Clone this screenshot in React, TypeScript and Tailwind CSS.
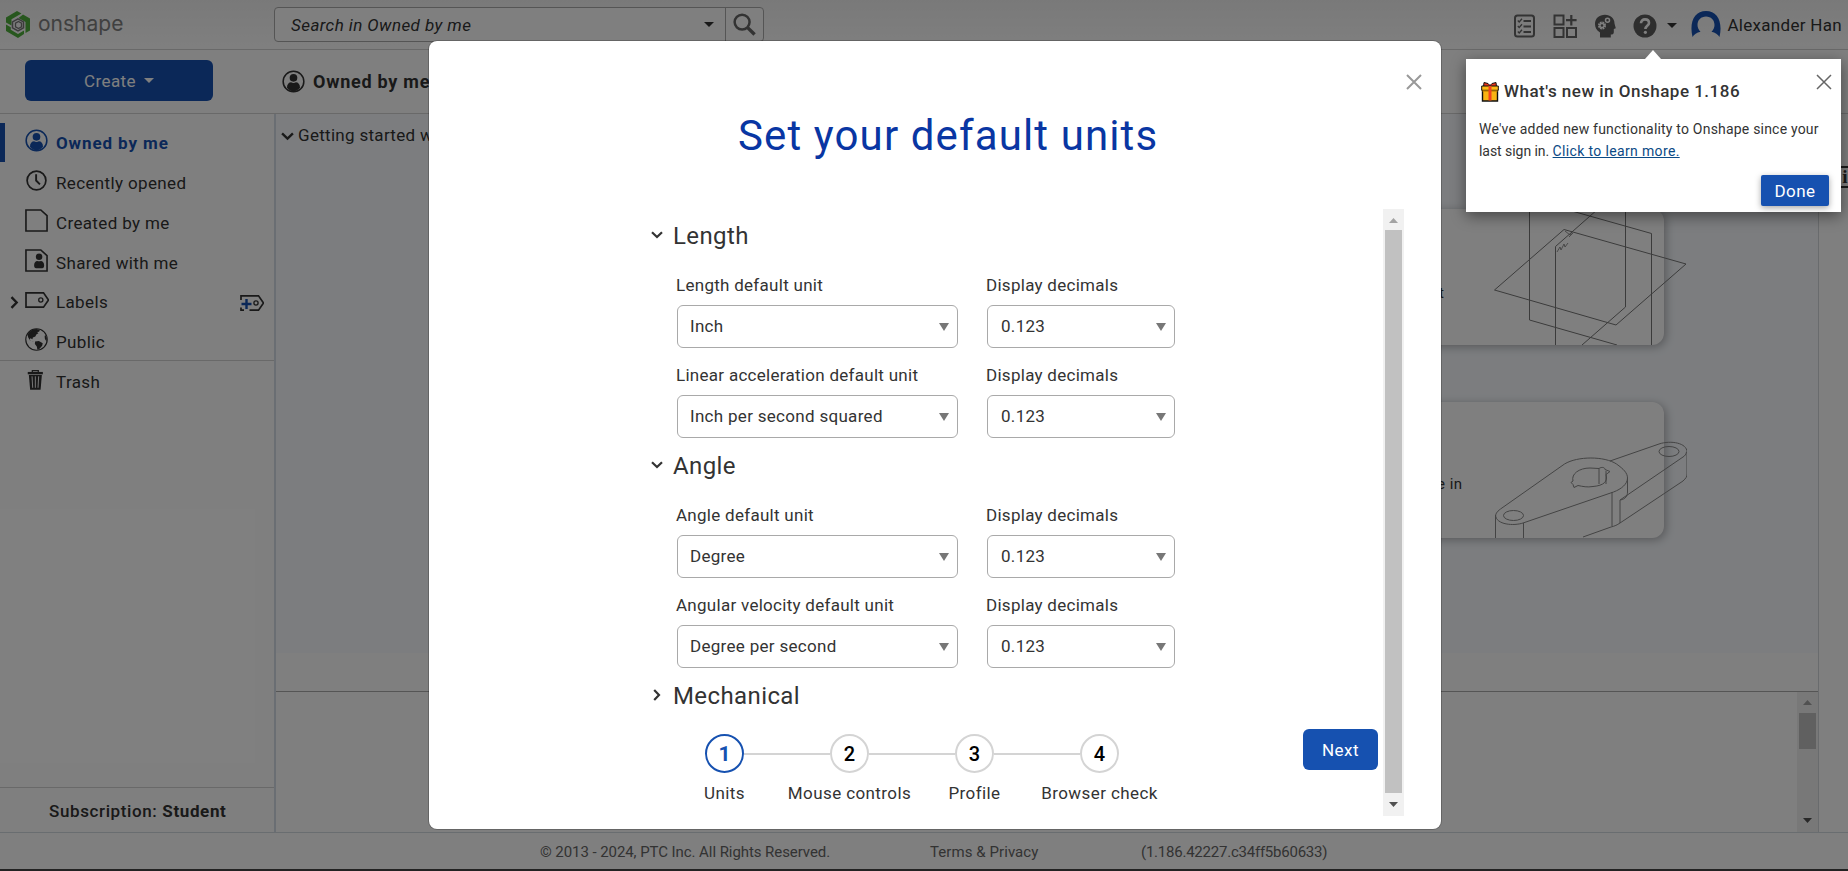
import React from 'react';

type P = { className?: string };

const UserCircle = ({ className }: P) => (
  <svg viewBox="0 0 24 24" className={className} fill="none">
    <circle cx="12" cy="12" r="10.8" stroke="currentColor" strokeWidth="1.6" />
    <circle cx="12" cy="8.2" r="4" fill="currentColor" />
    <path d="M5.2 18.4c0-3.6 2-5.6 4.3-5.6 1.6 1 3.4 1 5 0 2.3 0 4.3 2 4.3 5.6-1.7 2.3-4.1 3.6-6.8 3.6s-5.1-1.3-6.8-3.6z" fill="currentColor" />
  </svg>
);

const Clock = ({ className }: P) => (
  <svg viewBox="0 0 24 24" className={className} fill="none" stroke="currentColor">
    <circle cx="12" cy="12" r="9.8" strokeWidth="1.8" />
    <path d="M11.600 5.500v6.500l4 4" strokeWidth="2" />
  </svg>
);

const Doc = ({ className }: P) => (
  <svg viewBox="0 0 24 24" className={className} fill="none" stroke="currentColor" strokeWidth="1.700">
    <path d="M1 1h15.500L23 7v16H1z" />
  </svg>
);

const SharedDoc = ({ className }: P) => (
  <svg viewBox="0 0 24 24" className={className} fill="none">
    <path d="M1 1h15.500L23 7v16H1z" stroke="currentColor" strokeWidth="1.700" />
    <circle cx="14.700" cy="8.200" r="3.400" fill="currentColor" />
    <path d="M9.500 17c0-3 1.500-4.600 3.300-4.600 1.200.6 2.600.6 3.800 0 1.800 0 3.400 1.600 3.400 4.600 0 2-.8 3.200-2 3.200h-6.500c-1.200 0-2-1.200-2-3.200z" fill="currentColor" />
  </svg>
);

const Tag = ({ className }: P) => (
  <svg viewBox="0 0 24 24" className={className} fill="none" stroke="currentColor" strokeWidth="1.700">
    <path d="M1 4.800h17.500l5 7.200-5 7.200H1z" />
    <circle cx="15.800" cy="12" r="2.100" strokeWidth="1.300" />
  </svg>
);

const TagPlus = ({ className }: P) => (
  <svg viewBox="0 0 24 24" className={className} fill="none" stroke="#333" strokeWidth="1.700">
    <path d="M1 9V4.800h17.500l5 7.200-5 7.200H9.500M1 16.500v2.700h3" />
    <circle cx="16" cy="12" r="2.100" strokeWidth="1.300" />
    <path d="M6.500 8v10M1.500 13h10" stroke="#1651b0" strokeWidth="2.400" />
  </svg>
);

const Globe = ({ className }: P) => (
  <svg viewBox="0 0 24 24" className={className} fill="none">
    <circle cx="12" cy="12" r="11.200" stroke="currentColor" strokeWidth="1.200" />
    <path d="M2.500 7C4.500 3 8 1 12 1l3.500 1.200-.8 1.600-2 .4 1.300 1.400-2.200 1.200-1 2-2.600 1.200-.4 1.800-2.200-1-.8 1.400 1.600 1.200 2.800.8L8.600 14 5 12.800 3.400 10z" fill="currentColor" />
    <path d="M10.500 14.200l4-.6 4 2.200-.6 2.600-3 3.400-2 .6-.6-3.200-2-2.400z" fill="currentColor" />
    <path d="M21 6.800l1.800 3.700-.3 3.500-1.700-2.500-.3-2.500z" fill="currentColor" />
  </svg>
);

const Trash = ({ className }: P) => (
  <svg viewBox="0 0 24 24" className={className} fill="none">
    <path d="M8 3.500V1.800h6.500v1.700" stroke="currentColor" strokeWidth="1.400" />
    <path d="M3 3.200h16.500v2.600H3z" fill="currentColor" />
    <path d="M4.200 6.500h14.200L17 22.500H5.600z" fill="currentColor" />
    <path d="M7.700 8l.7 12.500M11.300 8v12.500M14.900 8l-.7 12.500" stroke="#fff" strokeWidth="1" />
  </svg>
);

const Chevron = ({ className }: P) => (
  <svg viewBox="0 0 12 8" className={className} fill="none" stroke="currentColor" strokeWidth="2.200">
    <path d="M1 1.200l5 4.800 5-4.800" />
  </svg>
);

const Triangle = ({ className }: P) => (
  <svg viewBox="0 0 10 6" preserveAspectRatio="none" className={className} fill="currentColor">
    <path d="M0 0h10L5 6z" />
  </svg>
);

const Cross = ({ className }: P) => (
  <svg viewBox="0 0 16 16" className={className} fill="none" stroke="currentColor">
    <path d="M1 1l14 14M15 1L1 15" />
  </svg>
);

const Logo = () => (
  <svg viewBox="0 0 24 27" className="h-[27px] w-6" fill="none">
    <path d="M11 0l4.500 2.600-10 5.700v6.200L0 11.600V6.500z" fill="#4fae3c" />
    <path d="M17 3.500l7 4v12l-4.500 2.500V11L12.500 7z" fill="#4fae3c" />
    <path d="M0 13.500l4.800 2.700v2.600L12 23l6-3.400 0 3.400-6 4L0 20z" fill="#4fae3c" />
    <path d="M12 7.800l5.500 3.100v6L12 20l-5.500-3.100v-6z" stroke="#777" strokeWidth="1.500" />
    <path d="M12.500 10.500l3 1.700v3.600l-3 1.700-3-1.700v-3.600z" stroke="#777" strokeWidth="1.300" />
  </svg>
);

const ChecklistIcon = () => (
  <svg viewBox="0 0 21 24" className="h-6 w-[21px]" fill="none" stroke="#666">
    <rect x="1" y="1.500" width="19" height="21" rx="2.500" strokeWidth="2" />
    <path d="M9.500 7H17M9.500 12.500H17M9.500 18H17" strokeWidth="2" />
    <path d="M3.800 6.500l1.400 1.500L8 4.800M3.800 12l1.400 1.500L8 10.300M3.800 17.500L5.200 19 8 15.800" strokeWidth="1.300" />
  </svg>
);

const AppsIcon = () => (
  <svg viewBox="0 0 24 24" className="h-6 w-6" fill="none" stroke="#666" strokeWidth="2">
    <rect x="1.500" y="1.500" width="9" height="9" />
    <rect x="1.500" y="14" width="9" height="9" />
    <rect x="14" y="14" width="9" height="9" />
    <path d="M18.300 1v10.500M13 6.200h10.600" strokeWidth="2.200" />
  </svg>
);

const HeadIcon = () => (
  <svg viewBox="0 0 22 24" className="h-6 w-[22px]">
    <path d="M11 .8c5.600 0 9.500 3.500 9.500 8.700l1.300 4.700-2 .8v3.200c0 1.500-1 2.300-3 2.300v3H6v-5C2.500 16.500 1 13.500 1 10 1 4.500 5.200.8 11 .8z" fill="#5c5c5c" />
    <circle cx="8" cy="11.500" r="3" fill="none" stroke="#fff" strokeWidth="2" strokeDasharray="1.700 .65" />
    <circle cx="8" cy="11.500" r="2" fill="none" stroke="#fff" strokeWidth="1.300" />
    <circle cx="13.500" cy="6.300" r="2" fill="none" stroke="#fff" strokeWidth="1.500" />
  </svg>
);

const HelpIcon = () => (
  <svg viewBox="0 0 24 24" className="h-6 w-6" fill="none">
    <circle cx="12" cy="12" r="11.500" fill="#5c5c5c" />
    <path d="M8 9.300c0-2.400 1.700-3.900 4-3.900s4 1.400 4 3.500c0 2.800-3.600 2.900-3.600 6" stroke="#fff" strokeWidth="2.600" />
    <circle cx="12.400" cy="18.300" r="1.600" fill="#fff" />
  </svg>
);

const Avatar = () => (
  <svg viewBox="0 0 30 30" className="h-[30px] w-[30px]">
    <path d="M1.500 26C-2 11 3.500 0 15 0s17 11 13.500 26c-1.500-2.700-4.300-4.300-8-5.300 2-1.900 3-4.200 3-6.700 0-5-3.500-8.500-8.500-8.500S6.500 9 6.500 14c0 2.500 1 4.800 3 6.700-3.700 1-6.500 2.600-8 5.300z" fill="#1651b0" />
  </svg>
);

const Gift = () => (
  <svg viewBox="0 0 18 21" className="h-[21px] w-[18px]">
    <path d="M3 1.500l4 1 2 2 2-2 4-1 .5 4.500h-13z" fill="#e8361c" stroke="#111" strokeWidth="1" />
    <path d="M1.500 9h15v11h-15z" fill="#f9b412" stroke="#111" strokeWidth="1.400" />
    <path d="M.7 5h16.600v4.300H.7z" fill="#fdb913" stroke="#111" strokeWidth="1" />
    <path d="M1.500 9.300h15v1.400h-15z" fill="#c98600" />
    <path d="M7.500 5h3v14.500h-3z" fill="#f0431f" />
  </svg>
);

function NavItem({ icon, label, active, before, after }: { icon: React.ReactNode; label: string; active?: boolean; before?: React.ReactNode; after?: React.ReactNode }) {
  return (
    <div className="flex h-[39.8px] items-center">
      <div className={active ? 'h-[39px] w-[5px] shrink-0 bg-[#1651b0]' : 'h-[39px] w-[5px] shrink-0'} />
      <div className="flex w-5 justify-center">{before}</div>
      <div className={active ? '-mt-1 w-[31px] text-[#1651b0]' : '-mt-1 w-[31px]'}>{icon}</div>
      <span className={active ? 'pt-0.5 font-bold tracking-[0.9px] text-[#1651b0]' : 'pt-0.5 tracking-[0.36px]'}>{label}</span>
      {after && <div className="mt-0.5 mr-[10px] ml-auto">{after}</div>}
    </div>
  );
}

function Field({ label, value, small }: { label: string; value: string; small?: boolean }) {
  return (
    <div className={small ? 'w-[188px]' : 'w-[281px]'}>
      <div className="-ml-px h-5 leading-5 tracking-[0.28px] whitespace-nowrap">{label}</div>
      <div className="mt-2.5 flex h-[43px] items-center justify-between rounded-md border border-[#a9a9a9] pr-2 pl-3">
        <span className={small ? 'pt-px pl-px tracking-[0.3px]' : 'pt-px tracking-[0.3px]'}>{value}</span>
        <Triangle className="h-2 w-2.5 text-[#777]" />
      </div>
    </div>
  );
}

function Fields({ rows }: { rows: [string, string][] }) {
  return (
    <div className="flex flex-col gap-[17px] pt-[25px] pb-3 pl-[248px]">
      {rows.map(([l, v]) => (
        <div key={l} className="flex gap-[29px]">
          <Field label={l} value={v} />
          <Field label="Display decimals" value="0.123" small />
        </div>
      ))}
    </div>
  );
}

function Heading({ text, closed }: { text: string; closed?: boolean }) {
  return (
    <div className="flex h-[30px] items-center pl-[220px]">
      <div className="flex w-6 pl-0.5">
        <Chevron className={closed ? 'h-2 w-3 -rotate-90' : 'h-2 w-3'} />
      </div>
      <span className="pt-0.5 text-[24px] leading-[30px] tracking-[0.4px]">{text}</span>
    </div>
  );
}

function Steps() {
  const steps = ['Units', 'Mouse controls', 'Profile', 'Browser check'];
  return (
    <div className="flex pt-[5px] pl-[233px]">
      {steps.map((s, i) => (
        <div key={s} className="flex w-[125px] flex-col items-center">
          <div className="flex h-[39px] w-full items-center">
            <div className={i === 0 ? 'h-0.5 flex-1' : 'h-0.5 flex-1 bg-[#d4d4d4]'} />
            <div
              className={
                i === 0
                  ? 'flex h-[39px] w-[39px] items-center justify-center rounded-full border-2 border-[#1651b0] pt-0.5 text-[21px] font-bold text-[#1651b0]'
                  : 'flex h-[39px] w-[39px] items-center justify-center rounded-full border-2 border-[#d4d4d4] text-[20px] font-medium text-black'
              }
            >
              {i + 1}
            </div>
            <div className={i === 3 ? 'h-0.5 flex-1' : 'h-0.5 flex-1 bg-[#d4d4d4]'} />
          </div>
          <span className="mt-2.5 leading-5 tracking-[0.4px] whitespace-nowrap">{s}</span>
        </div>
      ))}
    </div>
  );
}

const Planes = () => (
  <svg viewBox="0 0 194 136" className="absolute top-0 -right-[23px] h-[136px] w-[194px]" fill="none" stroke="#777" strokeWidth="1">
    <path d="M36.500 0v111L124 136" />
    <path d="M36.500 -10L158.500 24.500V136" />
    <path d="M62.500 136V37.500L105 0" />
    <path d="M132.500 0v98L89 136" />
    <path d="M71 20.500L193 55l-70 61L1.500 81z" />
    <path d="M72 22l5 4 2-3M76 28l4-4M64 43l3-5 1 3 3-6 1 3 3-4" strokeWidth=".8" />
  </svg>
);

const Bracket = () => (
  <svg viewBox="0 0 194 136" className="absolute -right-[23px] bottom-0 h-[136px] w-[194px]" fill="none" stroke="#888" strokeWidth="1">
    <path d="M2.500 136v-21c0-3 1-5 5-8l64-45c13-8 40-8 52 0 7 5 11 9 11 14 0 6-6 11-14 14L30 121c-9 3-27 2-27.500-8" />
    <path d="M117 59l49-17c12-4 28-1 28 8v22c0 3-1 4-4 7l-63 42c-3 2-5 3-9 4l-28 10M119 90v34M134.500 76v14c0 4-2 7-7 8M127 98v23M127 98l63-43c2-1 3-3 3.500-5M30.500 121v15" />
    <ellipse cx="20.500" cy="113.500" rx="10" ry="5" />
    <ellipse cx="176" cy="49.500" rx="10" ry="5" />
    <path d="M80 79c-2-7 6-13 17-13l9 .5c3-2 6-1 6 1l5 2-4 3c2 7-2 11-13 12-6 1-10 0-15-1l-4 2-1-3-2-2zM106 67v15M113 69v13" />
  </svg>
);

function Background() {
  return (
    <div className="flex h-[871px] w-full flex-col bg-white">
      <header className="flex h-[50px] shrink-0 items-center border-b border-[#d2d2d2] bg-linear-to-b from-[#f3f3f3] to-white">
        <div className="flex w-[274px] items-center pl-1.5">
          <Logo />
          <span className="-mt-0.5 ml-2 font-['Inter'] text-[21px] text-[#808080]">onshape</span>
        </div>
        <div className="flex h-[35px] w-[490px] rounded border border-[#aaa] bg-white">
          <div className="flex flex-1 items-center justify-between pr-[11px] pl-4">
            <span className="pt-0.5 tracking-[0.42px] italic">Search in Owned by me</span>
            <Triangle className="h-[5px] w-2.5" />
          </div>
          <div className="flex w-[38px] items-center justify-center border-l border-[#aaa]">
            <svg viewBox="0 0 24 24" className="h-[23px] w-[23px]" fill="none" stroke="#666">
              <circle cx="9.500" cy="9.500" r="7.800" strokeWidth="2.600" />
              <path d="M15 15l7.500 7.500" strokeWidth="3.600" />
            </svg>
          </div>
        </div>
        <div className="ml-auto flex items-center pt-0.5 pr-1.5">
          <ChecklistIcon />
          <div className="w-[18px]" />
          <AppsIcon />
          <div className="w-[17px]" />
          <HeadIcon />
          <div className="w-[17px]" />
          <HelpIcon />
          <Triangle className="mr-[14px] ml-[10px] h-[5px] w-2.5" />
          <Avatar />
          <span className="ml-1.5 tracking-[0.3px]">Alexander Han</span>
        </div>
      </header>
      <div className="flex h-16 shrink-0 items-center border-b border-[#d2d2d2]">
        <div className="-mt-0.5 ml-[25px] flex h-[41px] w-[188px] items-center justify-center gap-2 rounded-md bg-[#1651b0] pb-px text-white">
          <span className="pt-1 tracking-[0.4px]">Create</span>
          <Triangle className="h-[5px] w-2.5" />
        </div>
        <UserCircle className="ml-[69px] h-[23px] w-[23px]" />
        <span className="ml-2 text-[18px] font-bold tracking-[0.75px]">Owned by me</span>
      </div>
      <div className="flex min-h-0 flex-1">
        <nav className="flex w-[276px] shrink-0 flex-col border-r-2 border-[#d4dde6] pt-[9px]">
          <NavItem active icon={<UserCircle className="h-[23px] w-[23px]" />} label="Owned by me" />
          <NavItem icon={<Clock className="h-[23px] w-[23px]" />} label="Recently opened" />
          <NavItem icon={<Doc className="h-[23px] w-[23px]" />} label="Created by me" />
          <NavItem icon={<SharedDoc className="h-[23px] w-[23px]" />} label="Shared with me" />
          <NavItem
            before={<Chevron className="mr-3 ml-2.5 h-[9px] w-[13px] shrink-0 -rotate-90" />}
            icon={<Tag className="h-6 w-6" />}
            label="Labels"
            after={<TagPlus className="h-6 w-6" />}
          />
          <NavItem icon={<Globe className="h-[23px] w-[23px]" />} label="Public" />
          <div className="-mt-0.5 mb-px h-px bg-[#d2d2d2]" />
          <NavItem icon={<Trash className="h-[22px] w-[22px]" />} label="Trash" />
          <div className="mt-auto flex h-[45px] items-center border-t border-[#d2d2d2] pt-[3px] pl-[49px] font-medium tracking-[0.62px]">
            Subscription:&nbsp;<span className="font-bold">Student</span>
          </div>
        </nav>
        <div className="flex w-[1542px] shrink-0 flex-col">
          <div className="flex h-[539px] justify-between bg-[#f8fbff]">
            <div className="flex h-11 items-center pl-[5px]">
              <Chevron className="mr-[5px] h-[9px] w-[13px]" />
              <span className="-ml-px tracking-[0.3px]">Getting started with</span>
            </div>
            <div className="mt-[95px] mr-[154px] flex flex-col gap-[57px] text-[15px]">
              <div className="relative h-[136px] w-[400px] rounded-xl bg-white shadow-[2px_2px_10px_rgba(0,0,0,0.3)]">
                <span className="block pt-[73px] pl-[175px]">t</span>
                <Planes />
              </div>
              <div className="relative h-[136px] w-[400px] rounded-xl bg-white shadow-[2px_2px_10px_rgba(0,0,0,0.3)]">
                <span className="block pt-[71px] pl-[156px] tracking-[0.5px]">use in</span>
                <Bracket />
              </div>
            </div>
          </div>
          <div className="h-[39px] border-b border-[#aaa]" />
          <div className="flex flex-1 justify-end">
            <div className="flex w-[21px] flex-col items-center bg-[#f1f1f1] pt-2">
              <Triangle className="h-[5px] w-[9px] rotate-180 text-[#a3a3a3]" />
              <div className="mt-2 h-9 w-[17px] bg-[#c1c1c1]" />
              <Triangle className="mt-auto mb-[9px] h-[5px] w-[9px] text-[#505050]" />
            </div>
          </div>
        </div>
        <div className="flex-1 overflow-hidden border-l border-[#d2d6da] pt-[52px] pl-4">
          <div className="flex h-[22px] w-5 items-center justify-center rounded border-2 border-[#333] font-['Liberation_Serif'] text-[19px] font-bold">i</div>
        </div>
      </div>
      <footer className="flex h-[37px] shrink-0 items-center border-t border-[#d2dae0] pt-[3px] pl-[540px] text-[15px] text-[#666]">
        <span className="w-[390px] tracking-[-0.07px]">© 2013 - 2024, PTC Inc. All Rights Reserved.</span>
        <span className="w-[211px] tracking-[0.07px]">Terms &amp; Privacy</span>
        <span className="tracking-[-0.23px]">(1.186.42227.c34ff5b60633)</span>
      </footer>
      <div className="h-0.5 shrink-0 bg-[#222]" />
    </div>
  );
}

export default function App() {
  return (
    <div className="relative h-[871px] w-[1848px] overflow-hidden font-['Roboto',sans-serif] text-[17px] text-[#333]">
      <Background />
      <div className="absolute inset-x-0 top-0 h-[869px] bg-black/50" />

      <div className="absolute top-[41px] left-[429px] flex h-[788px] w-[1012px] flex-col rounded-lg bg-white shadow-[0_0_0_1px_rgba(0,0,0,0.2)]">
        <div className="flex h-[168px] shrink-0 items-start pl-[309px]">
          <h1 className="pt-[70px] text-[42px] leading-[50px] tracking-[1.12px] text-[#0936a3]">Set your default units</h1>
          <Cross className="mt-[33px] mr-[19px] ml-auto h-4 w-4 stroke-2 text-[#999]" />
        </div>
        <div className="flex h-[607px]">
          <div className="flex-1 pt-[11px]">
            <Heading text="Length" />
            <Fields rows={[['Length default unit', 'Inch'], ['Linear acceleration default unit', 'Inch per second squared']]} />
            <Heading text="Angle" />
            <Fields rows={[['Angle default unit', 'Degree'], ['Angular velocity default unit', 'Degree per second']]} />
            <Heading text="Mechanical" closed />
            <div className="flex items-start justify-between pt-[19px] pr-[5px]">
              <Steps />
              <div className="flex h-[41px] w-[75px] items-center justify-center rounded-md bg-[#1651b0] pt-0.5 tracking-[0.5px] text-white">Next</div>
            </div>
          </div>
          <div className="mr-[37px] flex w-[21px] flex-col items-center bg-[#f1f1f1] pt-[9px]">
            <Triangle className="h-[5px] w-[9px] shrink-0 rotate-180 text-[#a3a3a3]" />
            <div className="mt-[7px] h-[563px] w-[17px] shrink-0 bg-[#c1c1c1]" />
            <Triangle className="mt-[9px] h-[5px] w-[9px] shrink-0 text-[#505050]" />
          </div>
        </div>
      </div>

      <div className="absolute top-[59px] left-[1466px] h-[153px] w-[375px] bg-white shadow-[0_4px_14px_rgba(0,0,0,0.45)]">
        <svg viewBox="0 0 16 9" className="absolute -top-[9px] left-[179px] h-[9px] w-4" fill="#fff">
          <path d="M8 0l8 9H0z" />
        </svg>
        <div className="flex items-center pt-5 pl-[15px]">
          <Gift />
          <span className="ml-[5px] font-medium tracking-[0.5px]">What's new in Onshape 1.186</span>
          <Cross className="-mt-[19px] mr-[9px] ml-auto h-4 w-4 stroke-[1.500] text-[#666]" />
        </div>
        <p className="mt-[13px] pl-[13px] text-[14px] leading-[22px] tracking-[0.2px]">
          We've added new functionality to Onshape since your
          <br />
          <span className="tracking-[-0.05px]">last sign in. </span>
          <span className="tracking-[0.35px] text-[#0b4a85] underline">Click to learn more.</span>
        </p>
        <div className="absolute top-[116px] left-[295px] flex h-[31px] w-[68px] items-center justify-center rounded-[2px] bg-[#1651b0] pt-0.5 tracking-[0.4px] text-white shadow-[0_2px_6px_rgba(0,0,0,0.35)]">
          Done
        </div>
      </div>
    </div>
  );
}
